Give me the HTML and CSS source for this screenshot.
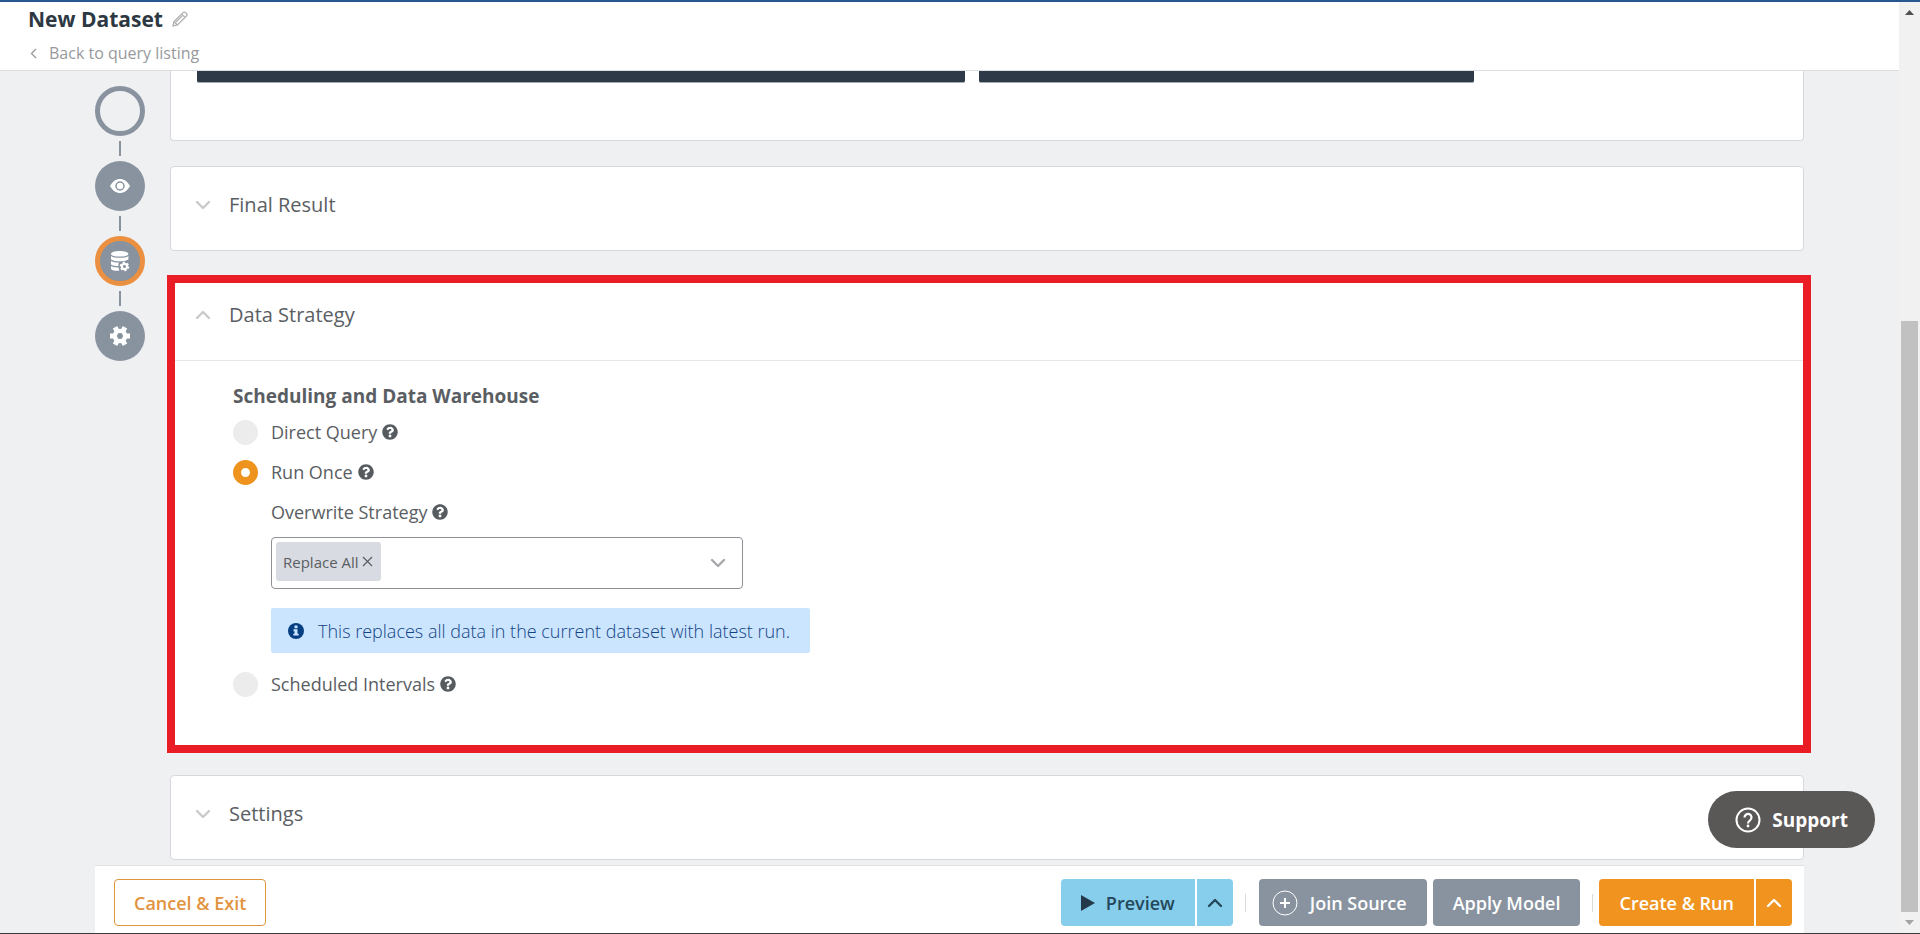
FILE: index.html
```html
<!DOCTYPE html>
<html lang="en">
<head>
<meta charset="utf-8">
<title>New Dataset</title>
<link rel="stylesheet" href="styles.css">
</head>
<body>
<svg class="sprite" aria-hidden="true">
  <symbol id="down" viewBox="0 0 16 10"><path d="M2 2l6 6 6-6" fill="none" stroke="currentColor" stroke-width="2.400" stroke-linecap="round" stroke-linejoin="round"/></symbol>
  <symbol id="up" viewBox="0 0 16 10"><path d="M2 8l6-6 6 6" fill="none" stroke="currentColor" stroke-width="2.400" stroke-linecap="round" stroke-linejoin="round"/></symbol>
  <symbol id="help" viewBox="0 0 512 512"><path fill="currentColor" d="M504 256c0 137-111 248-248 248S8 393 8 256 119 8 256 8s248 111 248 248zM262.700 90c-54.500 0-89.300 23-116.500 63.800-3.500 5.300-2.400 12.400 2.700 16.300l34.700 26.300c5.200 3.900 12.600 3 16.700-2.100 17.900-22.700 30.100-35.800 57.300-35.800 20.400 0 45.700 13.100 45.700 33 0 15-12.400 22.700-32.500 34C247.100 238.500 216 254.900 216 296v4c0 6.600 5.400 12 12 12h56c6.600 0 12-5.400 12-12v-1.300c0-28.500 83.200-29.600 83.200-106.700 0-58-60.200-102-116.500-102zM256 338c-25.400 0-46 20.600-46 46s20.600 46 46 46 46-20.600 46-46-20.600-46-46-46z"/></symbol>
</svg>
<div class="app">
  <div class="page">
    <header class="header">
      <h1 class="title">New Dataset
        <button class="edit" aria-label="Rename"><svg width="16" height="16" viewBox="0 0 16 16" fill="none" stroke="currentColor" stroke-width="1.300"><path d="M1 15l1-4.500L11 1.600a1.800 1.800 0 0 1 2.600 0l.8.800a1.800 1.800 0 0 1 0 2.600L5.500 14zM2 10.500L5.500 14M9.500 3l3.500 3.500M4 11l6-6"/></svg></button>
      </h1>
      <a class="back" href="#"><svg width="7" height="11" viewBox="0 0 7 11"><path d="M6 1L1.500 5.500 6 10" fill="none" stroke="currentColor" stroke-width="1.300"/></svg>Back to query listing</a>
    </header>
    <main class="main">
      <nav class="rail" aria-label="Steps">
        <button class="step step-empty" aria-label="Query"></button>
        <span class="link"></span>
        <button class="step" aria-label="Final result"><svg width="20" height="14" viewBox="0 0 20 14"><path d="M0 7C2.500 2.500 6 0 10 0s7.500 2.500 10 7c-2.500 4.500-6 7-10 7S2.500 11.500 0 7z" fill="#fff"/><circle cx="10" cy="7" r="4" fill="none" stroke="#88939f" stroke-width="1.500"/></svg></button>
        <span class="link"></span>
        <button class="step step-active" aria-label="Data strategy"><svg width="20" height="21" viewBox="0 0 20 21"><path fill="#fff" d="M1 3c0-1.700 3.800-3 8.700-3s8.700 1.300 8.700 3-3.800 2.600-8.700 2.600S1 4.700 1 3zM1 5c2 1.500 5 1.800 8.700 1.800S16.500 6.500 18.400 5v3.500c-2 1.300-5 1.800-8.700 1.800S3 9.800 1 8.500zM1 10c2 1.300 4.500 1.600 8 1.600-.6 1-.8 2.400-.5 3.400C5 15 2.500 14.500 1 13.500zM1 15c2 1.200 4.500 1.400 7.500 1.400l.8 3.400C5 20 2 19.500 1 18z"/><circle cx="14.500" cy="15.500" r="2.600" fill="none" stroke="#fff" stroke-width="2.200"/><circle cx="14.500" cy="15.500" r="4" fill="none" stroke="#fff" stroke-width="1.600" stroke-dasharray="2.090 2.090"/></svg></button>
        <span class="link"></span>
        <button class="step" aria-label="Settings"><svg width="20" height="20" viewBox="0 0 20 20"><circle cx="10" cy="10" r="5.100" fill="none" stroke="#fff" stroke-width="4.400"/><g stroke="#fff" stroke-width="5"><path d="M0 10h5M15 10h5M5 1.300l2.500 4.400M12.500 14.300l2.500 4.400M15 1.300l-2.500 4.400M7.500 14.300L5 18.700"/></g></svg></button>
      </nav>
      <div class="cards">
        <section class="card card-query"><div class="block block-wide"></div><div class="block block-narrow"></div></section>
        <section class="card">
          <button class="card-head"><svg class="chev"><use href="#down"/></svg>Final Result</button>
        </section>
        <section class="card card-marked">
          <button class="card-head"><svg class="chev"><use href="#up"/></svg>Data Strategy</button>
          <div class="card-body">
            <h2 class="group">Scheduling and Data Warehouse</h2>
            <div class="row"><input class="radio" type="radio" name="mode" id="direct"><label for="direct">Direct Query</label><svg class="help"><use href="#help"/></svg></div>
            <div class="row"><input class="radio" type="radio" name="mode" id="once" checked><label for="once">Run Once</label><svg class="help"><use href="#help"/></svg></div>
            <div class="nested">
              <div class="row"><label for="overwrite">Overwrite Strategy</label><svg class="help"><use href="#help"/></svg></div>
              <div class="combo">
                <span class="tag">Replace All<button class="tag-x" aria-label="Remove"><svg width="11" height="11" viewBox="0 0 11 11"><path d="M1 1l9 9M10 1l-9 9" stroke="currentColor" stroke-width="1.200"/></svg></button></span>
                <select class="select" id="overwrite"><option label=" "></option></select>
                <svg class="chev chev-combo"><use href="#down"/></svg>
              </div>
              <p class="info"><svg width="16" height="16" viewBox="0 0 16 16"><circle cx="8" cy="8" r="8" fill="#053f82"/><path d="M6.500 2.500h3v2.700h-3zM5.500 6.300h4v4.400h1.200v1.900H5.300v-1.900h1.200V8.200h-1z" fill="#cce5ff"/></svg>This replaces all data in the current dataset with latest run.</p>
            </div>
            <div class="row"><input class="radio" type="radio" name="mode" id="sched"><label for="sched">Scheduled Intervals</label><svg class="help"><use href="#help"/></svg></div>
          </div>
        </section>
        <section class="card">
          <button class="card-head"><svg class="chev"><use href="#down"/></svg>Settings</button>
        </section>
      </div>
    </main>
    <footer class="footer">
      <button class="btn btn-outline">Cancel &amp; Exit</button>
      <div class="actions">
        <div class="split">
          <button class="btn btn-blue btn-preview"><svg width="14" height="16" viewBox="0 0 14 16"><path d="M0 0l14 8-14 8z" fill="#24394a"/></svg>Preview</button>
          <button class="btn btn-blue btn-more" aria-label="Preview options"><svg class="chev"><use href="#up"/></svg></button>
        </div>
        <span class="sep"></span>
        <button class="btn btn-grey btn-join"><svg width="26" height="26" viewBox="0 0 26 26" fill="none" stroke="#fff"><circle cx="13" cy="13" r="12"/><path d="M8 13h10M13 8v10" stroke-width="2"/></svg>Join Source</button>
        <button class="btn btn-grey">Apply Model</button>
        <span class="sep sep-tight"></span>
        <div class="split">
          <button class="btn btn-orange">Create &amp; Run</button>
          <button class="btn btn-orange btn-more" aria-label="Create options"><svg class="chev"><use href="#up"/></svg></button>
        </div>
      </div>
    </footer>
  </div>
  <div class="scroll" aria-hidden="true">
    <svg class="arrow" viewBox="0 0 9 5"><path d="M0 5l4.500-5L9 5z" fill="#505050"/></svg>
    <div class="track"><div class="thumb"></div></div>
    <svg class="arrow" viewBox="0 0 9 5"><path d="M0 0l4.500 5L9 0z" fill="#a3a3a3"/></svg>
  </div>
  <button class="support"><svg width="26" height="26" viewBox="0 0 26 26" fill="none" stroke="#fff" stroke-width="2"><circle cx="13" cy="13" r="11.500"/><path d="M9.500 10.500a3.500 3.500 0 1 1 5.500 2.800c-1.300.9-2 1.500-2 3.200" stroke-width="2.200"/><circle cx="13" cy="19" r="1.400" fill="#fff" stroke="none"/></svg>Support</button>
</div>
</body>
</html>
```
FILE: styles.css
```css
* { box-sizing: border-box; }
body {
  margin: 0;
  font-family: "Open Sans", sans-serif;
  font-size: 18px;
  color: #5a5e63;
  background: #eff0f2;
}
button { font: inherit; color: inherit; border: 0; background: none; padding: 0; cursor: pointer; }
h1, h2, p { margin: 0; }
svg { flex: none; }
.sprite { position: absolute; width: 0; height: 0; }

.app {
  display: flex;
  height: 100vh;
  border-top: 2px solid #2a5690;
  border-bottom: 1px solid #3c3c3c;
  overflow: hidden;
}
.page { flex: 1; min-width: 0; display: flex; flex-direction: column; }

.header {
  flex: none;
  height: 69px;
  padding: 3px 28px 0;
  background: #fff;
  border-bottom: 1px solid #dcdfe2;
}
.title { display: flex; align-items: center; gap: 9px; font-size: 21px; line-height: 28px; font-weight: 700; color: #2d3843; }
.edit { display: flex; color: #b0b0b0; }
.back { display: inline-flex; align-items: center; gap: 12px; margin: 6px 0 0 2px; font-size: 16px; line-height: 28px; color: #97999c; text-decoration: none; }

.main { flex: 1; min-height: 0; display: flex; gap: 25px; padding: 0 95px; overflow: hidden; }
.rail { display: flex; flex-direction: column; align-items: center; gap: 5px; padding-top: 15px; }
.step { display: flex; align-items: center; justify-content: center; flex: none; width: 50px; height: 50px; border-radius: 50%; background: #88939f; }
.step-empty { background: none; border: 5px solid #88939f; }
.step-active { border: 5px solid #ea9040; }
.link { flex: none; width: 2px; height: 15px; background: #88939f; }

.cards { flex: 1; min-width: 0; display: flex; flex-direction: column; gap: 25px; }
.card { flex: none; background: #fff; border: 1px solid #d6d8dc; border-radius: 4px; }
.card-query { display: flex; gap: 14px; padding: 0 25px 57px 26px; border-top: 0; border-radius: 0 0 4px 4px; }
.block { height: 12px; background: #2f3a48; border-bottom: 1px solid #a5abb2; border-radius: 0 0 2px 2px; }
.block-wide { width: 48.600%; }
.block-narrow { width: 31.300%; }
.card-head { display: flex; align-items: center; gap: 18px; width: 100%; padding: 24px 25px 31px 24px; line-height: 28px; font-size: 20px; font-weight: 500; text-align: left; }
.chev { width: 16px; height: 10px; color: #c8cacc; }
.card-marked { position: relative; }
.card-marked::after { content: ""; position: absolute; inset: -2px -8px -4px -4px; border: 8px solid #ea1c25; pointer-events: none; }
.card-body { padding: 19px 62px 45px; border-top: 1px solid #e6e7e9; }
.group { font-size: 19px; line-height: 32px; font-weight: 700; }
.row { display: flex; align-items: center; height: 40px; font-weight: 500; }
.radio { appearance: none; flex: none; width: 25px; height: 25px; margin: 0 13px 0 0; border-radius: 50%; background: #ececec; }
.radio:checked { background: #fff; border: 8px solid #ef931f; }
.help { width: 16px; height: 16px; margin-left: 5px; color: #565b60; }
.nested { padding-left: 38px; }
.combo { display: flex; align-items: flex-start; position: relative; width: 472px; height: 52px; margin-top: 5px; padding: 4px; border: 1px solid #8e9196; border-radius: 4px; }
.tag { display: flex; align-items: center; gap: 3px; height: 39px; padding: 0 8px 0 7px; font-size: 15px; border-radius: 3px; background: #d9dbe2; }
.tag-x { display: flex; }
.select { appearance: none; flex: 1; height: 42px; border: 0; background: none; }
.chev-combo { position: absolute; right: 16px; top: 20px; color: #a6a8ab; pointer-events: none; }
.info { display: flex; align-items: center; gap: 14px; width: max-content; height: 45px; margin: 19px 0 11px; padding: 0 20px 0 17px; border-radius: 2px; background: #cce5ff; color: #124484; font-weight: 300; }

.footer { flex: none; display: flex; justify-content: space-between; margin: 0 95px; padding: 13px 12px 7px 19px; background: #fff; border-top: 1px solid #e0e2e5; }
.actions, .split { display: flex; align-items: center; }
.split { gap: 2px; }
.btn { display: flex; align-items: center; justify-content: center; height: 47px; padding: 0 20px; border-radius: 4px; font-weight: 600; white-space: nowrap; }
.btn .chev { color: inherit; }
.btn-outline { padding: 0 19px; border: 1px solid #e0963c; color: #e2933f; }
.btn-blue { background: #87ceec; color: #24475a; }
.btn-orange { background: #f0931f; color: #fff; }
.btn-grey { background: #88939f; color: #fff; }
.btn-preview { gap: 11px; }
.btn-join { gap: 12px; padding: 0 20px 0 13px; margin-right: 6px; }
.split .btn-more { width: 36px; padding: 0; border-radius: 0 4px 4px 0; }
.split .btn:first-child { border-radius: 4px 0 0 4px; }
.sep { width: 1px; height: 18px; margin: 0 13px 0 12px; background: #d8dadd; }
.sep-tight { margin-right: 6px; }

.scroll { flex: none; width: 21px; display: flex; flex-direction: column; align-items: center; background: #f1f1f1; }
.arrow { width: 9px; height: 5px; margin: 8px 0; }
.track { flex: 1; width: 17px; display: flex; flex-direction: column; justify-content: flex-end; }
.thumb { height: 66.500%; background: #c1c1c1; }

.support { position: fixed; right: 45px; bottom: 86px; display: flex; align-items: center; gap: 11px; height: 57px; padding: 0 27px; border-radius: 29px; background: #5a5757; color: #fff; font-size: 19px; font-weight: 700; }
```
